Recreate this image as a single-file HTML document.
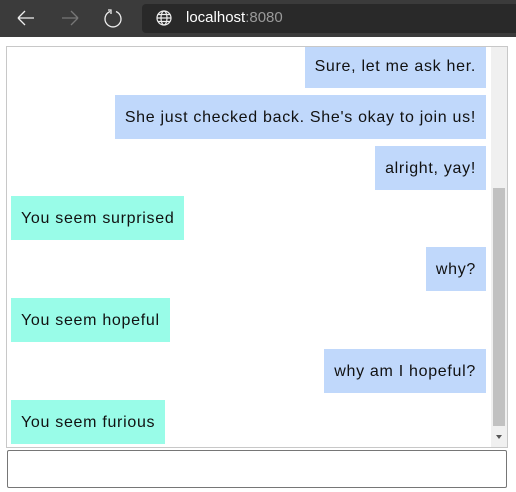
<!DOCTYPE html>
<html><head><style>
*{box-sizing:border-box}
body{margin:0;width:516px;height:492px;background:#fff;font-family:"Liberation Sans",sans-serif;overflow:hidden;position:relative}
.bar{position:absolute;left:0;top:0;width:516px;height:37px;background:#3b3b3b}
.addr{position:absolute;left:142px;top:4px;width:380px;height:29px;background:#292929;border-radius:4px}
.url{position:absolute;left:186px;top:9px;color:#fff;font-size:15px}
.url span{color:#9a9a9a}
.chat{position:absolute;left:6px;top:46px;width:502px;height:402px;border:1px solid #c8c8c8;overflow:hidden}
.sb{position:absolute;right:0;top:0;width:16px;height:400px;background:#f0f0f0}
.th{position:absolute;left:2px;top:141px;width:12px;height:238px;background:#c1c1c1}
.b{position:absolute;height:44px;padding:0 10px;line-height:45px;font-size:16px;letter-spacing:0.7px;color:#111;white-space:nowrap}
.r{background:#c0d8fb;right:21px}
.g{background:#99fce8;left:4px}
.in{position:absolute;left:7px;top:450px;width:500px;height:38px;border:1px solid #767676;border-radius:2px}
</style></head><body>
<div class="bar">
<svg width="140" height="37" style="position:absolute;left:0;top:0" fill="none" stroke-width="1.3">
<path d="M18 18h16M18 18l7-7M18 18l7 7" stroke="#eee"/>
<path d="M62 18h16M78 18l-7-7M78 18l-7 7" stroke="#777"/>
<path d="M110 11.5a8 8 0 1 0 6 0M108 10h3v4" stroke="#eee"/>
</svg>
<div class="addr"></div>
<svg width="20" height="20" style="position:absolute;left:155px;top:8px" fill="none" stroke="#eee" stroke-width="1.2"><circle cx="9" cy="10" r="7"/><ellipse cx="9" cy="10" rx="3" ry="7"/><path d="M2 10h14M3 6.5h12M3 13.5h12"/></svg>
<div class="url">localhost<span>:8080</span></div>
</div>
<div class="chat">
<div class="b r" style="top:-3px">Sure, let me ask her.</div>
<div class="b r" style="top:48px">She just checked back. She's okay to join us!</div>
<div class="b r" style="top:99px">alright, yay!</div>
<div class="b g" style="top:149px">You seem surprised</div>
<div class="b r" style="top:200px">why?</div>
<div class="b g" style="top:251px">You seem hopeful</div>
<div class="b r" style="top:302px">why am I hopeful?</div>
<div class="b g" style="top:353px">You seem furious</div>
<div class="sb"><div class="th"></div>
<svg width="16" height="10" style="position:absolute;left:0;top:386px"><path d="M5 2h6l-3 4z" fill="#555"/></svg></div>
</div>
<div class="in"></div>
</body></html>
